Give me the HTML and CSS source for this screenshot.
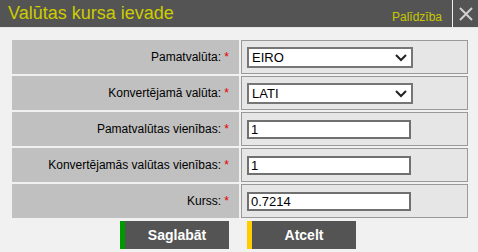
FILE: index.html
```html
<html>

<head>
    <meta charset="utf-8">
    <title>Valūtas kursa ievade</title>
    <link rel="stylesheet" href="styles.css">
</head>

<body>
    <div class="header">
        <div class="title">Valūtas kursa ievade</div>
        <a class="help" href="#">Palīdzība</a>
        <div class="close">
            <svg width="16" height="16" viewBox="0 0 16 16">
                <path d="M2 2 L14 14 M14 2 L2 14" stroke="#d0d0d0" stroke-width="2" fill="none"/>
            </svg>
        </div>
    </div>

    <div class="form">
        <div class="grid">
            <div class="label">Pamatvalūta: <span class="req">*</span></div>
            <div class="field">
                <div class="select-wrap">
                    <select class="select">
                        <option>EIRO</option>
                    </select>
                    <svg class="chevron" width="12" height="8" viewBox="0 0 12 8">
                        <path d="M1 1 L6 6 L11 1" stroke="#222" stroke-width="2" fill="none"/>
                    </svg>
                </div>
            </div>

            <div class="label">Konvertējamā valūta: <span class="req">*</span></div>
            <div class="field">
                <div class="select-wrap">
                    <select class="select">
                        <option>LATI</option>
                    </select>
                    <svg class="chevron" width="12" height="8" viewBox="0 0 12 8">
                        <path d="M1 1 L6 6 L11 1" stroke="#222" stroke-width="2" fill="none"/>
                    </svg>
                </div>
            </div>

            <div class="label">Pamatvalūtas vienības: <span class="req">*</span></div>
            <div class="field">
                <input class="text" type="text" value="1">
            </div>

            <div class="label">Konvertējamās valūtas vienības: <span class="req">*</span></div>
            <div class="field">
                <input class="text" type="text" value="1">
            </div>

            <div class="label">Kurss: <span class="req">*</span></div>
            <div class="field">
                <input class="text" type="text" value="0.7214">
            </div>
        </div>

        <div class="buttons">
            <button class="btn save">Saglabāt</button>
            <button class="btn cancel">Atcelt</button>
        </div>
    </div>
</body>

</html>
```

FILE: styles.css
```css
html,
body {
    margin: 0;
    height: 100%;
    background: #f1f1f1;
    font-family: "Liberation Sans", Arial, sans-serif;
    overflow: hidden;
}

.header {
    height: 27px;
    background: #545454;
    display: flex;
    align-items: center;
    border-bottom: 1px solid #e6e6e6;
}

.title {
    flex: 1;
    padding-left: 8px;
    font-size: 18px;
    color: #cccc00;
    margin-top: -1px;
}

.help {
    font-size: 12px;
    color: #c8c800;
    text-decoration: none;
    margin-top: 6px;
    margin-right: 10px;
}

.close {
    width: 25px;
    height: 27px;
    border-left: 1px solid #f0f0f0;
    display: flex;
    align-items: center;
    justify-content: center;
}

.form {
    padding: 12px 0 0 12px;
}

.grid {
    display: grid;
    grid-template-columns: 227px 227px;
    grid-auto-rows: 34px;
    gap: 2px;
}

.label {
    background: #c0c0c0;
    display: flex;
    align-items: center;
    justify-content: flex-end;
    padding-right: 10px;
    font-size: 12px;
    color: #000;
    white-space: pre;
}

.req {
    color: #e00000;
}

.field {
    background: #e6e6e6;
    border: 1px solid #999;
    display: flex;
    align-items: center;
    padding-left: 5px;
}

.select-wrap {
    position: relative;
    width: 166px;
    height: 21px;
}

.select {
    appearance: none;
    -webkit-appearance: none;
    width: 166px;
    height: 21px;
    border: 2px solid #767676;
    border-radius: 0;
    background: #fff;
    font-family: "Liberation Sans", Arial, sans-serif;
    font-size: 13px;
    color: #000;
    padding: 0 0 0 3px;
    margin: 0;
    outline: none;
}

.chevron {
    position: absolute;
    right: 6px;
    top: 7px;
}

.text {
    width: 164px;
    height: 19px;
    box-sizing: border-box;
    border: 2px solid #707070;
    background: #fff;
    font-family: "Liberation Sans", Arial, sans-serif;
    font-size: 13px;
    color: #000;
    padding: 0 0 0 2px;
    margin: 0;
    outline: none;
}

.buttons {
    display: flex;
    justify-content: center;
    gap: 18px;
    margin-top: 3px;
    padding-right: 14px;
}

.btn {
    width: 109px;
    height: 28px;
    border: none;
    background: #545454;
    color: #fff;
    font-family: "Liberation Sans", Arial, sans-serif;
    font-weight: bold;
    font-size: 14px;
    padding: 0;
}

.save {
    border-left: 5px solid #009a00;
}

.cancel {
    border-left: 5px solid #ffcc00;
}
```
